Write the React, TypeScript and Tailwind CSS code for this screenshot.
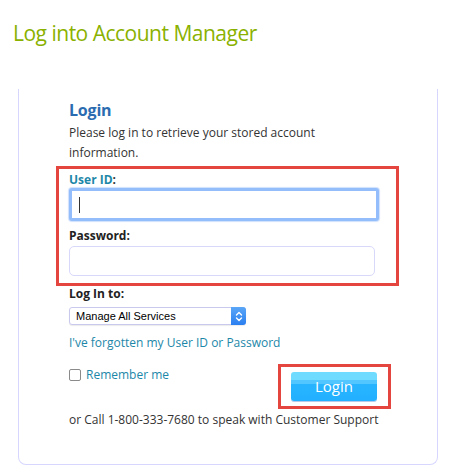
export default function App() {
  return (
    <div
      className="w-[455px] h-[476px] bg-white overflow-hidden"
      style={{ fontFamily: '"Open Sans", "Liberation Sans", sans-serif' }}
    >
      <h1 className="pl-[13px] pt-[19px] text-[21px] leading-[28px] tracking-[-0.5px] text-[#8ab100] font-normal">
        Log into Account Manager
      </h1>

      <div className="ml-[18px] mt-[42px] w-[420px] h-[376px] border-x border-b border-[#d6d6ff] rounded-b-[8px]">
        <div className="pl-[50px] pt-[10px]">
          <h2 className="text-[16px] leading-[22px] tracking-[-0.2px] font-bold text-[#2b6cb0]">Login</h2>
          <p className="mt-[2px] text-[12px] leading-[20px] text-[#333] w-[260px]">
            Please log in to retrieve your stored account information.
          </p>
        </div>

        {/* highlighted credentials */}
        <div className="ml-[37px] mt-[3px] w-[343px] border-[3px] border-[#e5453f] pl-[10px] pt-[3px] pb-[7px]">
          <label className="block text-[12px] leading-[16px] font-bold text-[#1c87a8]">
            User ID<span className="text-[#333]">:</span>
          </label>
          <div className="w-[310px] h-[33px] rounded-[3px] border-[3px] border-[#94bdfb] shadow-[0_0_1px_1px_#cfe0fc] bg-white flex items-center pl-[7px]">
            <div className="w-px h-[16px] bg-[#333]" />
          </div>
          <label className="block mt-[7px] text-[12px] leading-[16px] font-bold text-[#222]">
            Password:
          </label>
          <div className="mt-[2px] w-[306px] h-[30px] rounded-[5px] border border-[#d8d8fb] bg-white" />
        </div>

        <div className="pl-[50px]">
          <div className="text-[12px] leading-[16px] font-bold text-[#222]">Log In to:</div>
          <div className="mt-[5px] w-[177px] h-[18px] rounded-[3px] border border-[#c9c9ee] bg-white flex items-center justify-between shadow-[0_1px_1px_rgba(0,0,0,0.08)]">
            <span
              className="pl-[6px] text-[11px] text-black leading-none"
              style={{ fontFamily: '"Liberation Sans", Arial, sans-serif' }}
            >
              Manage All Services
            </span>
            <div className="w-[15px] h-[18px] -mr-px rounded-r-[3px] bg-gradient-to-b from-[#5aa6f7] to-[#2a7ff0] flex items-center justify-center">
              <svg width="8" height="11" viewBox="0 0 8 11" fill="none" stroke="white" strokeWidth="1.4" strokeLinecap="round" strokeLinejoin="round">
                <path d="M1.5 4 L4 1.5 L6.5 4" />
                <path d="M1.5 7 L4 9.5 L6.5 7" />
              </svg>
            </div>
          </div>
          <a className="block mt-[10px] text-[12px] leading-[16px] text-[#1c87a8]">
            I've forgotten my User ID or Password
          </a>

          <div className="flex items-start mt-[13px]">
            <label className="w-[209px] flex items-center gap-[5px] mt-[3px] text-[12px] leading-[16px] text-[#1c87a8]">
              <span className="w-[12px] h-[12px] rounded-[2px] border border-[#8a8a8a] bg-white" />
              Remember me
            </label>
            <div className="w-[113px] h-[45px] border-[3px] border-[#e5453f] pl-[10px] pt-[5px]">
              <button className="w-[86px] h-[29px] rounded-[3px] text-white text-[15px] leading-none bg-[linear-gradient(#6fdcff_0%,#6fdcff_26%,#52c6ff_26%,#52c6ff_40%,#28b4ff_40%,#22b0ff_100%)] shadow-[0_1px_0_#b6c9e8]">
                Login
              </button>
            </div>
          </div>

          <p className="mt-[3px] text-[12px] leading-[16px] text-[#333]">
            or Call 1-800-333-7680 to speak with Customer Support
          </p>
        </div>
      </div>
    </div>
  );
}
